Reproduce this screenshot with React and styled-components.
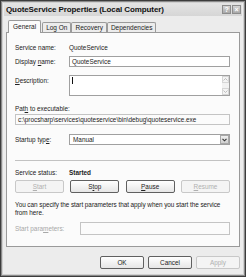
import React from "react";
import styled, { createGlobalStyle, css } from "styled-components";

const Global = createGlobalStyle`
  html, body { margin: 0; padding: 0; background: #fff; }
  body { font-family: "Liberation Sans", Arial, sans-serif; }
  * { box-sizing: border-box; }
`;

const Window = styled.div`
  width: 246px;
  height: 277px;
  background: #ececec;
  border: 1px solid #3c3c3c;
  box-shadow: inset 0 0 0 1px #8a8a8a, inset 0 0 0 2px #d0d0d0;
  display: flex;
  flex-direction: column;
  padding: 2px 3px 3px 3px;
  overflow: hidden;
`;

const TitleBar = styled.div`
  height: 13px;
  display: flex;
  align-items: center;
  justify-content: space-between;
  padding: 0 1px 0 2px;
  background: linear-gradient(#e4e4e4, #d6d6d6);
  font-weight: bold;
  font-size: 8px;
  color: #111;
  letter-spacing: -0.1px;
`;

const TitleButtons = styled.div`
  display: flex;
  gap: 1px;
`;

const TitleBtn = styled.div`
  width: 9px;
  height: 9px;
  border: 1px solid #8c8c8c;
  background: linear-gradient(#d4d4d4, #a8a8a8);
  color: #fff;
  font-size: 7px;
  line-height: 7px;
  text-align: center;
  font-weight: bold;
`;

const Body = styled.div`
  flex: 1;
  display: flex;
  flex-direction: column;
  padding: 4px 2px 0 2px;
`;

const Tabs = styled.div`
  display: flex;
  align-items: flex-end;
  padding-left: 2px;
  height: 12px;
  position: relative;
  z-index: 1;
`;

const Tab = styled.div`
  font-size: 6.5px;
  color: #222;
  border: 1px solid #9a9a9a;
  border-bottom: none;
  background: ${(p) => (p.$active ? "#fbfbfb" : "#ececec")};
  height: ${(p) => (p.$active ? "13px" : "10px")};
  margin-bottom: ${(p) => (p.$active ? "-1px" : "0")};
  padding: ${(p) => (p.$active ? "2px 4px 0" : "1px 3px 0")};
  margin-right: ${(p) => (p.$active ? "1px" : "0")};
  border-radius: 2px 2px 0 0;
  white-space: nowrap;
`;

const Panel = styled.div`
  height: 215px;
  background: #fbfbfb;
  border: 1px solid #9a9a9a;
  padding: 9px 9px 0 8px;
  display: flex;
  flex-direction: column;
  font-size: 6.4px;
  color: #222;
`;

const Row = styled.div`
  display: grid;
  grid-template-columns: 54px 1fr;
  align-items: ${(p) => (p.$top ? "start" : "center")};
  margin-top: ${(p) => p.$mt || 0}px;
  height: ${(p) => (p.$h ? `${p.$h}px` : "auto")};
`;

const Label = styled.span`
  color: ${(p) => (p.$disabled ? "#a8a8a8" : "#222")};
  white-space: nowrap;
  padding-top: ${(p) => p.$pt || 0}px;
`;

const Value = styled.span`
  color: #222;
  font-weight: ${(p) => (p.$bold ? "bold" : "normal")};
`;

const fieldBase = css`
  border: 1px solid #a0a0a0;
  background: #fff;
  height: ${(p) => p.$h || 11}px;
  display: flex;
  align-items: center;
  padding: 0 2px;
  color: #222;
  font-size: 6.4px;
  white-space: nowrap;
  overflow: hidden;
`;

const Field = styled.div`
  ${fieldBase}
  ${(p) =>
    p.$disabled &&
    css`
      background: #fbfbfb;
      border-color: #c4c4c4;
    `}
`;

const TextArea = styled.div`
  ${fieldBase}
  height: 21px;
  align-items: flex-start;
  padding: 0 0 0 2px;
  justify-content: space-between;
`;

const Caret = styled.span`
  width: 1px;
  height: 7px;
  background: #111;
  margin-top: 1px;
`;

const ScrollBar = styled.div`
  width: 7px;
  height: 100%;
  display: flex;
  flex-direction: column;
  justify-content: space-between;
  background: #f2f2f2;
`;

const ScrollBtn = styled.div`
  height: 7px;
  display: flex;
  align-items: center;
  justify-content: center;
  border: 1px solid #d6d6d6;
  background: #f4f4f4;
`;

const Select = styled.div`
  ${fieldBase}
  height: 11px;
  padding: 0 0 0 3px;
  justify-content: space-between;
`;

const DropBtn = styled.div`
  width: 9px;
  height: 9px;
  border: 1px solid #a8a8a8;
  background: linear-gradient(#f0f0f0, #cfcfcf);
  display: flex;
  align-items: center;
  justify-content: center;
`;

const PathLabel = styled.div`
  margin-top: 9px;
  line-height: 8px;
`;

const PathField = styled(Field)`
  margin-top: 1px;
`;

const Separator = styled.div`
  height: 1px;
  background: #c2c2c2;
  margin-top: 15px;
`;

const ButtonRow = styled.div`
  display: grid;
  grid-template-columns: repeat(4, 49px);
  justify-content: space-between;
  margin-top: 4px;
`;

const Button = styled.div`
  height: 13px;
  border: 1px solid ${(p) => (p.$disabled ? "#c8c8c8" : "#606060")};
  border-radius: 2px;
  background: ${(p) => (p.$disabled ? "#f4f4f4" : "linear-gradient(#ffffff, #e6e6e6)")};
  color: ${(p) => (p.$disabled ? "#b0b0b0" : "#222")};
  display: flex;
  align-items: center;
  justify-content: center;
  font-size: 6.4px;
`;

const Para = styled.p`
  margin: 8px 0 0 0;
  line-height: 8px;
  color: #222;
  white-space: nowrap;
  letter-spacing: -0.05px;
`;

const ParamRow = styled.div`
  display: grid;
  grid-template-columns: 65px 1fr;
  align-items: center;
  margin-top: 5px;
`;

const Footer = styled.div`
  display: flex;
  justify-content: flex-end;
  gap: 4px;
  padding: 9px 0 0;
`;

const FooterBtn = styled(Button)`
  width: 44px;
`;

const U = styled.u`
  text-decoration: underline;
  text-underline-offset: 1px;
`;

export default function App() {
  return (
    <>
      <Global />
      <Window>
        <TitleBar>
          <span>QuoteService Properties (Local Computer)</span>
          <TitleButtons>
            <TitleBtn>?</TitleBtn>
            <TitleBtn>×</TitleBtn>
          </TitleButtons>
        </TitleBar>
        <Body>
          <Tabs>
            <Tab $active>General</Tab>
            <Tab>Log On</Tab>
            <Tab>Recovery</Tab>
            <Tab>Dependencies</Tab>
          </Tabs>
          <Panel>
            <Row $h={10}>
              <Label>Service name:</Label>
              <Value>QuoteService</Value>
            </Row>
            <Row $mt={4}>
              <Label>Display <U>n</U>ame:</Label>
              <Field>QuoteService</Field>
            </Row>
            <Row $mt={8} $top>
              <Label $pt={2}><U>D</U>escription:</Label>
              <TextArea>
                <Caret />
                <ScrollBar>
                  <ScrollBtn>
                    <svg width="5" height="3" viewBox="0 0 5 3">
                      <path d="M0.5 2.5 L2.5 0.5 L4.5 2.5" stroke="#b0b0b0" fill="none" strokeWidth="0.8" />
                    </svg>
                  </ScrollBtn>
                  <ScrollBtn>
                    <svg width="5" height="3" viewBox="0 0 5 3">
                      <path d="M0.5 0.5 L2.5 2.5 L4.5 0.5" stroke="#b0b0b0" fill="none" strokeWidth="0.8" />
                    </svg>
                  </ScrollBtn>
                </ScrollBar>
              </TextArea>
            </Row>
            <PathLabel>Pat<U>h</U> to executable:</PathLabel>
            <PathField $disabled>c:\procsharp\services\quoteservice\bin\debug\quoteservice.exe</PathField>
            <Row $mt={9}>
              <Label>Startup typ<U>e</U>:</Label>
              <Select>
                <span>Manual</span>
                <DropBtn>
                  <svg width="5" height="4" viewBox="0 0 5 4">
                    <path d="M0.5 0.8 L2.5 2.8 L4.5 0.8" stroke="#333" fill="none" strokeWidth="1.1" />
                  </svg>
                </DropBtn>
              </Select>
            </Row>
            <Separator />
            <Row $mt={8}>
              <Label>Service status:</Label>
              <Value $bold>Started</Value>
            </Row>
            <ButtonRow>
              <Button $disabled><U>S</U>tart</Button>
              <Button>S<U>t</U>op</Button>
              <Button><U>P</U>ause</Button>
              <Button $disabled><U>R</U>esume</Button>
            </ButtonRow>
            <Para>
              You can specify the start parameters that apply when you start the service
              <br />
              from here.
            </Para>
            <ParamRow>
              <Label $disabled>Start para<U>m</U>eters:</Label>
              <Field $disabled $h={13} />
            </ParamRow>
          </Panel>
          <Footer>
            <FooterBtn>OK</FooterBtn>
            <FooterBtn>Cancel</FooterBtn>
            <FooterBtn $disabled>Apply</FooterBtn>
          </Footer>
        </Body>
      </Window>
    </>
  );
}
